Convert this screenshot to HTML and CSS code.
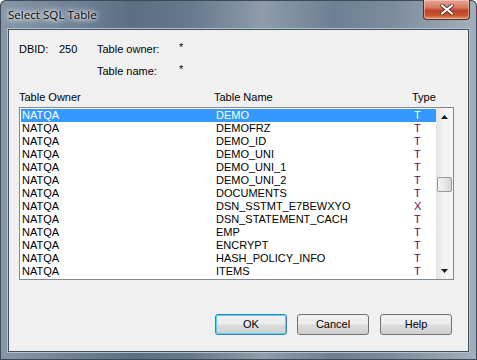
FILE: index.html
```html
<!DOCTYPE html>
<html>
<head>
<meta charset="utf-8">
<link rel="stylesheet" href="styles.css">
</head>
<body>
<div class="window">
  <div class="titlebar">
    <span class="title">Select SQL Table</span>
    <div class="close-btn">
      <svg width="14" height="11" viewBox="0 0 14 11"><path d="M2 1.5 L12 9.5 M12 1.5 L2 9.5" stroke="#4a2a2a" stroke-width="3.6" stroke-linecap="round"/><path d="M2 1.5 L12 9.5 M12 1.5 L2 9.5" stroke="#ffffff" stroke-width="2.2" stroke-linecap="round"/></svg>
    </div>
  </div>
  <div class="client">
    <div class="info">
      <span class="c1">DBID:</span><span class="c2">250</span><span class="c3">Table owner:</span><span class="c4">*</span>
      <span class="c1"></span><span class="c2"></span><span class="c3">Table name:</span><span class="c4">*</span>
    </div>
    <div class="headers">
      <span class="h-owner">Table Owner</span><span class="h-name">Table Name</span><span class="h-type">Type</span>
    </div>
    <div class="listbox">
      <div class="rows">
        <div class="row selected"><span class="owner">NATQA</span><span class="name">DEMO</span><span class="type">T</span></div>
        <div class="row"><span class="owner">NATQA</span><span class="name">DEMOFRZ</span><span class="type">T</span></div>
        <div class="row"><span class="owner">NATQA</span><span class="name">DEMO_ID</span><span class="type">T</span></div>
        <div class="row"><span class="owner">NATQA</span><span class="name">DEMO_UNI</span><span class="type">T</span></div>
        <div class="row"><span class="owner">NATQA</span><span class="name">DEMO_UNI_1</span><span class="type">T</span></div>
        <div class="row"><span class="owner">NATQA</span><span class="name">DEMO_UNI_2</span><span class="type">T</span></div>
        <div class="row"><span class="owner">NATQA</span><span class="name">DOCUMENTS</span><span class="type">T</span></div>
        <div class="row"><span class="owner">NATQA</span><span class="name">DSN_SSTMT_E7BEWXYO</span><span class="type">X</span></div>
        <div class="row"><span class="owner">NATQA</span><span class="name">DSN_STATEMENT_CACH</span><span class="type">T</span></div>
        <div class="row"><span class="owner">NATQA</span><span class="name">EMP</span><span class="type">T</span></div>
        <div class="row"><span class="owner">NATQA</span><span class="name">ENCRYPT</span><span class="type">T</span></div>
        <div class="row"><span class="owner">NATQA</span><span class="name">HASH_POLICY_INFO</span><span class="type">T</span></div>
        <div class="row"><span class="owner">NATQA</span><span class="name">ITEMS</span><span class="type">T</span></div>
      </div>
      <div class="scrollbar">
        <div class="arrow"><svg width="7" height="4" viewBox="0 0 7 4"><path d="M0 4 L3.5 0 L7 4 Z" fill="#1a1a1a"/></svg></div>
        <div class="track track-top"></div>
        <div class="thumb"></div>
        <div class="track track-bottom"></div>
        <div class="arrow"><svg width="7" height="4" viewBox="0 0 7 4"><path d="M0 0 L3.5 4 L7 0 Z" fill="#1a1a1a"/></svg></div>
      </div>
    </div>
    <div class="buttons">
      <div class="btn default">OK</div>
      <div class="btn">Cancel</div>
      <div class="btn">Help</div>
    </div>
  </div>
</div>
</body>
</html>
```

FILE: styles.css
```css
html, body {
  margin: 0;
  padding: 0;
}
body {
  width: 477px;
  height: 360px;
  overflow: hidden;
  font-family: "Liberation Sans", Arial, sans-serif;
  font-size: 11px;
  color: #000;
}
.window {
  width: 477px;
  height: 360px;
  box-sizing: border-box;
  display: flex;
  flex-direction: column;
  padding: 0 8px 8px 8px;
  background:
    linear-gradient(90deg, #8797a7 0%, #74879a 12%, #5b6f84 28%, #667a8d 40%, #8e9cab 55%, #6d8093 70%, #7a8c9d 82%, #a3afbb 100%);
  border-radius: 6px 6px 0 0;
  box-shadow: inset 0 0 0 1px #3b4b5b;
}
.titlebar {
  height: 29px;
  display: flex;
  align-items: flex-start;
  justify-content: space-between;
}
.title {
  margin-top: 7px;
  font-family: "Open Sans", "Noto Sans", sans-serif;
  font-size: 11.6px;
  color: #000;
  text-shadow: 0 0 6px #fff, 0 0 10px #fff, 0 0 3px #fff;
}
.close-btn {
  width: 45px;
  height: 19px;
  margin-right: -1px;
  border: 1px solid #5b2a22;
  border-top: none;
  border-radius: 0 0 4px 4px;
  background: linear-gradient(180deg, #e8a493 0%, #d47a64 40%, #c1432c 55%, #c8502f 80%, #e09a6f 100%);
  box-shadow: inset 0 0 0 1px rgba(255,220,210,0.5);
  display: flex;
  align-items: center;
  justify-content: center;
}
.client {
  flex: 1;
  background: #f0f0f0;
  border: 1px solid #3d4f62;
  box-shadow: 0 0 0 1px #b6c1cc;
  padding: 0 15px 0 10px;
  display: flex;
  flex-direction: column;
}
.info {
  display: grid;
  grid-template-columns: 40px 38px 82px auto;
  grid-auto-rows: 22px;
  margin-top: 13px;
  line-height: 13px;
}
.info span {
  display: block;
}
.info .c4 {
  line-height: 9px;
}
.headers {
  display: flex;
  margin-top: 4px;
  height: 13px;
  line-height: 13px;
}
.h-owner { width: 195px; }
.h-name { width: 198px; }
.listbox {
  margin-top: 3px;
  width: 435px;
  height: 173px;
  box-sizing: border-box;
  border: 1px solid #828790;
  background: #fff;
  display: flex;
}
.rows {
  flex: 1;
  padding: 1px 0 0 1px;
}
.row {
  display: flex;
  height: 13px;
  line-height: 13px;
  box-sizing: border-box;
  padding-left: 1px;
}
.row .owner { width: 194px; }
.row .name { width: 198px; }
.row .type { color: #5a0a5a; }
.row.selected {
  background: #3399ff;
  color: #fff;
  outline: 1px dotted #e07010;
  outline-offset: -1px;
}
.row.selected .type { color: #fff; }
.scrollbar {
  width: 17px;
  display: flex;
  flex-direction: column;
  background: linear-gradient(90deg, #e3e3e3 0%, #f2f2f2 40%, #f6f6f6 100%);
}
.arrow {
  height: 17px;
  display: flex;
  align-items: center;
  justify-content: center;
}
.track-top { height: 52px; }
.thumb {
  height: 15px;
  margin: 0 1px;
  box-sizing: border-box;
  border: 1px solid #979797;
  border-radius: 2px;
  background: linear-gradient(90deg, #f2f2f2 0%, #e8e8e8 50%, #d4d4d4 100%);
}
.track-bottom { flex: 1; }
.buttons {
  display: flex;
  margin-top: 34px;
  padding-left: 196px;
  gap: 10px;
}
.btn {
  width: 72px;
  height: 21px;
  box-sizing: border-box;
  border: 1px solid #707070;
  border-radius: 3px;
  background: linear-gradient(180deg, #f2f2f2 0%, #ebebeb 48%, #dddddd 52%, #cfcfcf 100%);
  display: flex;
  align-items: center;
  justify-content: center;
  line-height: 13px;
}
.btn + .btn + .btn { margin-left: 1px; }
.btn.default {
  border-color: #3c7fb1;
  box-shadow: inset 0 0 0 1px #48d7fb;
}
```
